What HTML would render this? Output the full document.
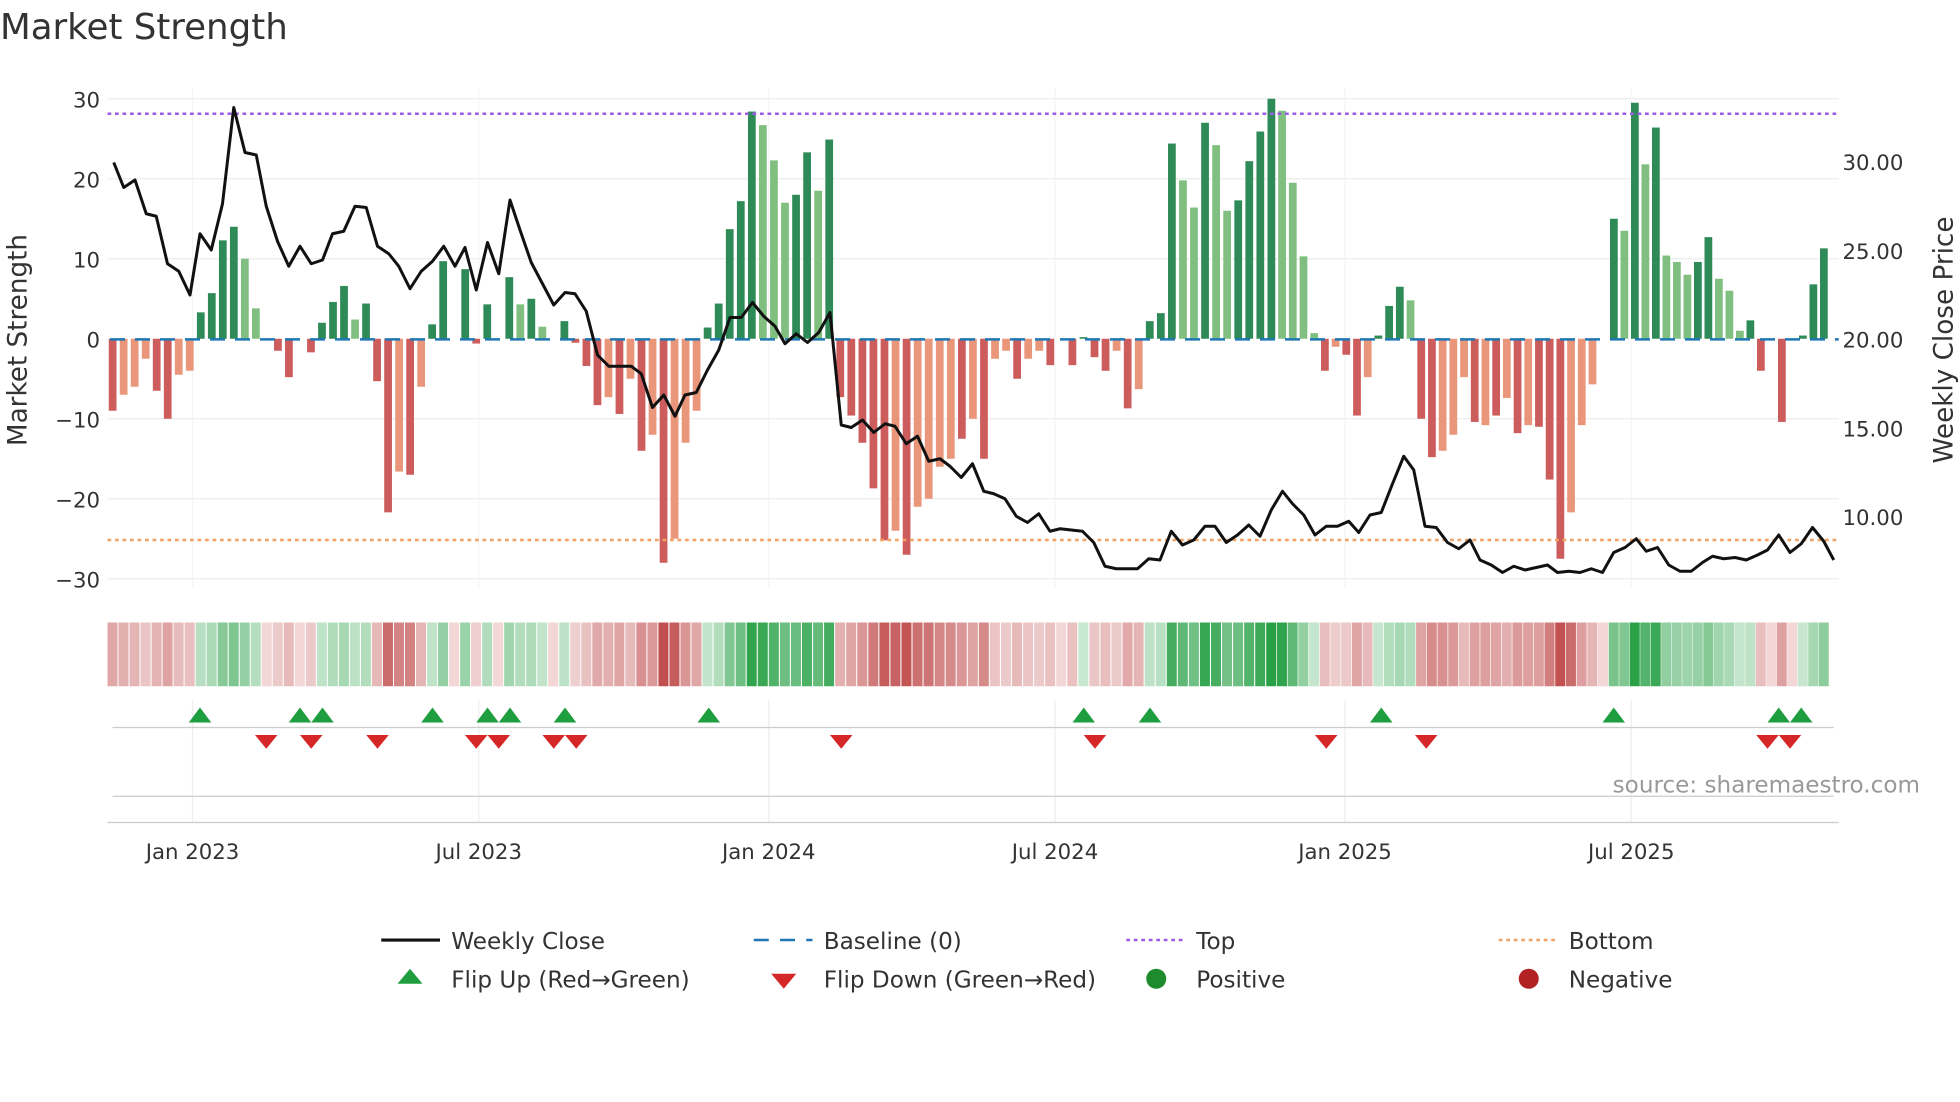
<!DOCTYPE html>
<html><head><meta charset="utf-8">
<style>
html,body{margin:0;padding:0;background:#fff;}
svg{display:block;font-family:"DejaVu Sans","Liberation Sans",sans-serif;}
</style></head>
<body>
<svg id="s" width="1960" height="1102" viewBox="0 0 1568 881.6" xmlns="http://www.w3.org/2000/svg">
<rect width="1568" height="882" fill="#fff"/>
<text x="0" y="31" font-size="28.5" fill="#333">Market Strength</text>
<g id="grid" stroke="#ececec" stroke-width="1"></g>
<g id="strip"></g>
<g id="bars"></g>
<line x1="86" y1="91" x2="1471" y2="91" stroke="#9b5de5" stroke-width="2" stroke-dasharray="3,3"/>
<line x1="86" y1="432" x2="1471" y2="432" stroke="#f4a261" stroke-width="2" stroke-dasharray="3,3"/>
<line x1="88" y1="271.5" x2="1471" y2="271.5" stroke="#1f77b4" stroke-width="2" stroke-dasharray="12,8"/>
<polyline id="price" fill="none" stroke="#111" stroke-width="2.4" stroke-linejoin="round"/>
<g id="marks"></g>
<line x1="90" y1="582" x2="1467" y2="582" stroke="#ccc"/>
<line x1="90" y1="637" x2="1467" y2="637" stroke="#ccc"/>
<line x1="86" y1="658" x2="1471" y2="658" stroke="#ccc"/>
<g font-size="17" fill="#333" text-anchor="end">
<text x="80" y="86">30</text><text x="80" y="150">20</text><text x="80" y="214">10</text><text x="80" y="278">0</text>
<text x="80" y="342">−10</text><text x="80" y="406">−20</text><text x="80" y="470">−30</text>
</g>
<g font-size="17" fill="#333">
<text x="1474" y="136">30.00</text><text x="1474" y="207">25.00</text><text x="1474" y="278">20.00</text>
<text x="1474" y="349">15.00</text><text x="1474" y="420">10.00</text>
</g>
<text transform="translate(21,272) rotate(-90)" font-size="21" fill="#333" text-anchor="middle">Market Strength</text>
<text transform="translate(1562,272) rotate(-90)" font-size="21" fill="#333" text-anchor="middle">Weekly Close Price</text>
<g font-size="17" fill="#333" text-anchor="middle">
<text x="154" y="687">Jan 2023</text><text x="383" y="687">Jul 2023</text><text x="615" y="687">Jan 2024</text>
<text x="844" y="687">Jul 2024</text><text x="1076" y="687">Jan 2025</text><text x="1305" y="687">Jul 2025</text>
</g>
<text x="1536" y="634" font-size="18.5" fill="#999" text-anchor="end">source: sharemaestro.com</text>
<g font-size="18.5" fill="#333">
<line x1="305" y1="752" x2="352" y2="752" stroke="#111" stroke-width="2.5"/>
<text x="361" y="759">Weekly Close</text>
<line x1="603" y1="752" x2="650" y2="752" stroke="#1f77b4" stroke-width="2" stroke-dasharray="12,9"/>
<text x="659" y="759">Baseline (0)</text>
<line x1="901" y1="752" x2="946" y2="752" stroke="#9b5de5" stroke-width="2" stroke-dasharray="3,3"/>
<text x="957" y="759">Top</text>
<line x1="1199" y1="752" x2="1244" y2="752" stroke="#f4a261" stroke-width="2" stroke-dasharray="3,3"/>
<text x="1255" y="759">Bottom</text>
<polygon points="328,775 338,787 318,787" fill="#1e9e3e"/>
<text x="361" y="790">Flip Up (Red→Green)</text>
<polygon points="617,779 637,779 627,791" fill="#d62728"/>
<text x="659" y="790">Flip Down (Green→Red)</text>
<circle cx="925" cy="783" r="8" fill="#1e8c2e"/>
<text x="957" y="790">Positive</text>
<circle cx="1223" cy="783" r="8" fill="#b22222"/>
<text x="1255" y="790">Negative</text>
</g>
</svg>
<script>
var NS="http://www.w3.org/2000/svg";
function el(t,a,p){var e=document.createElementNS(NS,t);for(var k in a)e.setAttribute(k,a[k]);document.getElementById(p).appendChild(e);return e;}
[79,143,207,335,399,463].forEach(function(y){el("line",{x1:86,y1:y,x2:1471,y2:y},"grid");});
[154,383,615,844,1076,1305].forEach(function(x){el("line",{x1:x,y1:70,x2:x,y2:470,stroke:"#f4f4f4"},"grid");el("line",{x1:x,y1:560,x2:x,y2:658,stroke:"#eee"},"grid");});
var V=[-9,1,-7,0,-6,0,-2.5,0,-6.5,1,-10,1,-4.5,0,-4,0,3.3,1,5.7,1,12.3,1,14,1,10,0,3.8,0,0,0,-1.5,1,-4.8,1,0,0,-1.7,1,2,1,4.6,1,6.6,1,2.4,0,4.4,1,-5.3,1,-21.7,1,-16.6,0,-17,1,-6,0,1.8,1,9.7,1,0,0,8.7,1,-0.6,1,4.3,1,0,0,7.7,1,4.3,0,5,1,1.5,0,0,0,2.2,1,-0.5,1,-3.4,1,-8.3,1,-7.3,0,-9.4,1,-5,0,-14,1,-12,0,-28,1,-25,0,-13,0,-9,0,1.4,1,4.4,1,13.7,1,17.2,1,28.4,1,26.7,0,22.3,0,17,0,18,1,23.3,1,18.5,0,24.9,1,-7.3,1,-9.6,1,-13,1,-18.7,1,-25.2,1,-24,0,-27,1,-21,0,-20,0,-16,0,-15,0,-12.5,1,-10,0,-15,1,-2.5,0,-1.5,0,-5,1,-2.5,0,-1.5,0,-3.3,1,0,0,-3.3,1,0.2,1,-2.3,1,-4,1,-1.5,0,-8.7,1,-6.3,0,2.2,1,3.2,1,24.4,1,19.8,0,16.4,0,27,1,24.2,0,16,0,17.3,1,22.2,1,25.9,1,30,1,28.5,0,19.5,0,10.3,0,0.7,0,-4,1,-1,0,-2,1,-9.6,1,-4.8,0,0.4,1,4.1,1,6.5,1,4.8,0,-10,1,-14.8,1,-14,0,-12,0,-4.8,0,-10.4,1,-10.8,0,-9.6,1,-7.4,0,-11.8,1,-10.8,0,-11,1,-17.6,1,-27.5,1,-21.7,0,-10.8,0,-5.7,0,0,0,15,1,13.5,0,29.5,1,21.8,0,26.4,1,10.4,0,9.6,0,8,0,9.6,1,12.7,1,7.5,0,6,0,1,0,2.3,1,-4,1,0,0,-10.4,1,0,0,0.4,1,6.8,1,11.3,1];
var n=V.length/2;
var vals=[];for(var i=0;i<n;i++)vals.push(V[2*i]);
var A=[[0,90],[vals.indexOf(1.4),566],[vals.indexOf(30),1017],[vals.indexOf(15),1291],[n-1,1459]];
function xi(i){for(var k=0;k<A.length-1;k++){if(i<=A[k+1][0]){var a=A[k],b=A[k+1];return a[1]+(b[1]-a[1])*(i-a[0])/(b[0]-a[0]);}}return A[A.length-1][1];}
function mix(c,t){var w=[255,255,255];return "rgb("+c.map(function(v,i){return Math.round(w[i]+(v-w[i])*t);}).join(",")+")";}
for(var i=0;i<n;i++){
 var v=V[2*i],d=V[2*i+1],x=xi(i);
 if(v!==0){var c=v>0?(d?"#2e8b57":"#80bf80"):(d?"#cd5c5c":"#e9967a");
  var y0=271,y1=271-v*6.4;
  el("rect",{x:x-3,y:Math.min(y0,y1),width:6.2,height:Math.abs(y1-y0),fill:c},"bars");}
 var t=Math.min(1,0.25+Math.abs(v)/30*0.75);
 var sc=v>=0?mix([40,160,70],t):mix([190,70,70],t);
 if(v===0) sc="#f3d6d6";
 el("rect",{x:x-4,y:498,width:8,height:51,fill:sc},"strip");
}
var P=[[91,130],[99,150],[108,144],[117,171],[125,173],[134,211],[143,217],[152,236],[160,187],[169,200],[178,163],[187,86],[196,122],[205,124],[213,165],[222,193],[231,213],[240,197],[249,211],[258,208],[266,187],[275,185],[284,165],[293,166],[302,197],[311,203],[319,213],[328,231],[337,217],[346,209],[355,197],[364,213],[372,198],[381,232],[390,194],[399,219],[408,160],[416,184],[425,210],[434,227],[443,244],[452,234],[460,235],[469,249],[478,284],[487,293],[496,293],[505,293],[513,299],[522,326],[531,316],[540,333],[548,316],[557,314],[566,296],[575,280],[584,254],[593,254],[602,242],[611,253],[620,261],[628,275],[637,267],[646,274],[655,266],[664,250],[673,340],[681,342],[690,336],[699,346],[708,339],[716,341],[725,355],[734,349],[743,369],[752,367],[760,373],[769,382],[778,371],[787,393],[795,395],[804,399],[813,413],[822,418],[831,411],[840,425],[848,423],[857,424],[866,425],[875,434],[884,453],[893,455],[902,455],[910,455],[919,447],[928,448],[937,425],[946,436],[955,432],[964,421],[972,421],[981,434],[990,428],[999,420],[1008,429],[1017,408],[1026,393],[1034,403],[1043,412],[1052,428],[1061,421],[1070,421],[1079,417],[1087,426],[1096,412],[1105,410],[1114,387],[1123,365],[1131,376],[1140,421],[1149,422],[1158,434],[1167,439],[1176,432],[1184,448],[1193,452],[1202,458],[1211,453],[1220,456],[1229,454],[1238,452],[1246,458],[1255,457],[1264,458],[1273,455],[1282,458],[1291,442],[1300,438],[1309,431],[1317,441],[1326,438],[1335,452],[1344,457],[1353,457],[1362,450],[1370,445],[1379,447],[1388,446],[1397,448],[1406,444],[1414,440],[1423,428],[1432,442],[1441,435],[1450,422],[1459,433],[1467,448]];
document.getElementById("price").setAttribute("points",P.map(function(p){return p.join(",");}).join(" "));
[160,240,258,346,390,408,452,567,867,920,1105,1291,1423,1441].forEach(function(x){el("polygon",{points:x+",566 "+(x+9)+",578 "+(x-9)+",578",fill:"#1e9e3e"},"marks");});
[213,249,302,381,399,443,461,673,876,1061,1141,1414,1432].forEach(function(x){el("polygon",{points:(x-9)+",588 "+(x+9)+",588 "+x+",599",fill:"#d62728"},"marks");});
</script>
</body></html>
